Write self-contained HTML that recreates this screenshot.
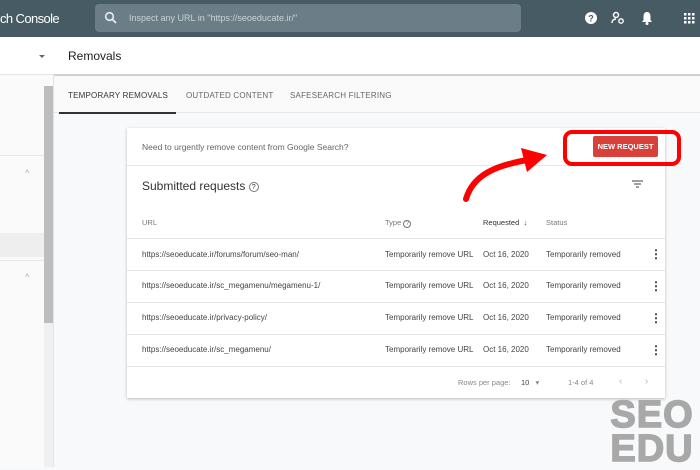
<!DOCTYPE html><html><head><style>
*{margin:0;padding:0;box-sizing:border-box}
body{width:700px;height:467px;overflow:hidden;background:#f8f9fa;font-family:"Liberation Sans",sans-serif;position:relative;color:#3c4043}
.a{position:absolute}
.t{font-size:8px;color:#444;white-space:nowrap}
</style></head><body>
<div class="a" style="left:0;top:0;width:700px;height:37px;background:#475b65"></div>
<div class="a" style="left:0;top:11px;font-size:13px;color:#fff;letter-spacing:-0.6px">ch Console</div>
<div class="a" style="left:95px;top:4px;width:426px;height:28px;background:#6b7e87;border-radius:4px"></div>
<svg class="a" style="left:104px;top:11px" width="14" height="14" viewBox="0 0 14 14"><circle cx="5.5" cy="5.5" r="3.8" fill="none" stroke="#e8eaed" stroke-width="1.6"/><path d="M8.3 8.3L12 12" stroke="#e8eaed" stroke-width="1.8"/></svg>
<div class="a" style="left:129px;top:13px;font-size:9px;color:#c9d1d5">Inspect any URL in "https://seoeducate.ir/"</div>
<svg class="a" style="left:584px;top:11px" width="14" height="14"><circle cx="7" cy="7" r="6" fill="#fff"/><text x="7" y="10.5" font-size="9" font-weight="bold" fill="#475b65" text-anchor="middle" font-family="Liberation Sans">?</text></svg>
<svg class="a" style="left:611px;top:11px" width="14" height="14"><circle cx="5" cy="4" r="2.5" fill="none" stroke="#fff" stroke-width="1.4"/><path d="M1 12c0-3 2-4 4-4" fill="none" stroke="#fff" stroke-width="1.4"/><circle cx="10" cy="10" r="2.2" fill="none" stroke="#fff" stroke-width="1.4"/></svg>
<svg class="a" style="left:641px;top:11px" width="12" height="14"><path d="M6 1C3 1 2.5 4 2.5 6v3L1 11h10L9.5 9V6C9.5 4 9 1 6 1z" fill="#fff"/><circle cx="6" cy="12.5" r="1.5" fill="#fff"/></svg>
<svg class="a" style="left:684px;top:13px" width="11" height="11" fill="#fff"><rect x="0" y="0" width="2.5" height="2.5"/><rect x="4" y="0" width="2.5" height="2.5"/><rect x="8" y="0" width="2.5" height="2.5"/><rect x="0" y="4" width="2.5" height="2.5"/><rect x="4" y="4" width="2.5" height="2.5"/><rect x="8" y="4" width="2.5" height="2.5"/><rect x="0" y="8" width="2.5" height="2.5"/><rect x="4" y="8" width="2.5" height="2.5"/><rect x="8" y="8" width="2.5" height="2.5"/></svg>
<!-- sidebar -->
<div class="a" style="left:0;top:37px;width:54px;height:430px;background:#fafafa;border-right:1px solid #e4e4e4"></div>
<div class="a" style="left:0;top:37px;width:54px;height:38px;background:#fff;border-bottom:1px solid #e4e4e4"></div>
<div class="a" style="left:39px;top:55px;border:3px solid transparent;border-top:3px solid #666"></div>
<div class="a" style="left:0;top:155px;width:44px;height:1px;background:#e8e8e8"></div>
<div class="a" style="left:0;top:233px;width:44px;height:24px;background:#eeeeee"></div>
<div class="a" style="left:0;top:260px;width:44px;height:1px;background:#e8e8e8"></div>
<div class="a" style="left:25px;top:168px;font-size:9px;color:#aaa">^</div>
<div class="a" style="left:25px;top:272px;font-size:9px;color:#aaa">^</div>
<div class="a" style="left:44px;top:86px;width:9px;height:237px;background:#bdbdbd"></div>
<div class="a" style="left:44px;top:323px;width:9px;height:144px;background:#f0f0f0"></div>
<!-- header -->
<div class="a" style="left:54px;top:37px;width:646px;height:39px;background:#fff;border-bottom:2px solid #d0d0d0"></div>
<div class="a" style="left:68px;top:49px;font-size:12px;color:#202124">Removals</div>
<div class="a" style="left:54px;top:77px;width:646px;height:36px;background:#fafafa;border-bottom:1px solid #e6e6e6"></div>
<div class="a" style="left:68px;top:91px;font-size:8px;color:#333;letter-spacing:0.2px">TEMPORARY REMOVALS</div>
<div class="a" style="left:186px;top:91px;font-size:8px;color:#666;letter-spacing:0.2px">OUTDATED CONTENT</div>
<div class="a" style="left:290px;top:91px;font-size:8px;color:#666;letter-spacing:0.2px">SAFESEARCH FILTERING</div>
<div class="a" style="left:59px;top:112px;width:117px;height:2px;background:#333"></div>
<!-- card -->
<div class="a" style="left:127px;top:128px;width:538px;height:270px;background:#fff;box-shadow:0 1px 3px rgba(0,0,0,.25)"></div>
<div class="a" style="left:142px;top:142px;font-size:8.5px;color:#666">Need to urgently remove content from Google Search?</div>
<div class="a" style="left:593px;top:136px;width:65px;height:21px;background:#d9403a;border-radius:2px;color:#fff;font-size:7.5px;font-weight:bold;text-align:center;line-height:21px">NEW REQUEST</div>
<div class="a" style="left:127px;top:165px;width:538px;height:1px;background:#e8e8e8"></div>
<div class="a" style="left:142px;top:179px;font-size:12px;color:#333">Submitted requests <span style="display:inline-block;width:10px;height:10px;border:1px solid #777;border-radius:50%;font-size:7px;text-align:center;line-height:9px;vertical-align:1px">?</span></div>
<svg class="a" style="left:632px;top:180px" width="11" height="9"><path d="M0 1h11M2 4h7M4 7h3" stroke="#666" stroke-width="1.3"/></svg>
<div class="a t" style="left:142px;top:218px;color:#777;font-size:7.5px">URL</div>
<div class="a t" style="left:385px;top:218px;color:#777;font-size:7.5px">Type <span style="display:inline-block;width:8px;height:8px;border:1px solid #777;border-radius:50%;font-size:6px;text-align:center;line-height:7px">?</span></div>
<div class="a t" style="left:483px;top:218px;color:#333;font-size:7.5px">Requested &nbsp;<b>↓</b></div>
<div class="a t" style="left:546px;top:218px;color:#777;font-size:7.5px">Status</div>
<div class="a" style="left:127px;top:238px;width:538px;height:1px;background:#e8e8e8"></div>
<div class="a" style="left:127px;top:270px;width:538px;height:1px;background:#e8e8e8"></div>
<div class="a" style="left:127px;top:302px;width:538px;height:1px;background:#e8e8e8"></div>
<div class="a" style="left:127px;top:334px;width:538px;height:1px;background:#e8e8e8"></div>
<div class="a" style="left:127px;top:366px;width:538px;height:1px;background:#e8e8e8"></div>
<div class="a t" style="left:142px;top:250px">https://seoeducate.ir/forums/forum/seo-man/</div>
<div class="a t" style="left:142px;top:281px">https://seoeducate.ir/sc_megamenu/megamenu-1/</div>
<div class="a t" style="left:142px;top:313px">https://seoeducate.ir/privacy-policy/</div>
<div class="a t" style="left:142px;top:345px">https://seoeducate.ir/sc_megamenu/</div>

<div class="a t" style="left:385px;top:250px">Temporarily remove URL</div>
<div class="a t" style="left:385px;top:281px">Temporarily remove URL</div>
<div class="a t" style="left:385px;top:313px">Temporarily remove URL</div>
<div class="a t" style="left:385px;top:345px">Temporarily remove URL</div>
<div class="a t" style="left:483px;top:250px">Oct 16, 2020</div>
<div class="a t" style="left:483px;top:281px">Oct 16, 2020</div>
<div class="a t" style="left:483px;top:313px">Oct 16, 2020</div>
<div class="a t" style="left:483px;top:345px">Oct 16, 2020</div>
<div class="a t" style="left:546px;top:250px">Temporarily removed</div>
<div class="a t" style="left:546px;top:281px">Temporarily removed</div>
<div class="a t" style="left:546px;top:313px">Temporarily removed</div>
<div class="a t" style="left:546px;top:345px">Temporarily removed</div>
<div class="a" style="left:650px;top:247px;font-size:12px;font-weight:bold;color:#333">⋮</div>
<div class="a" style="left:650px;top:279px;font-size:12px;font-weight:bold;color:#333">⋮</div>
<div class="a" style="left:650px;top:311px;font-size:12px;font-weight:bold;color:#333">⋮</div>
<div class="a" style="left:650px;top:343px;font-size:12px;font-weight:bold;color:#333">⋮</div>
<div class="a t" style="left:458px;top:378px;color:#888;font-size:7.5px">Rows per page: &nbsp;&nbsp;&nbsp;&nbsp;<span style="color:#444">10</span> &nbsp;&nbsp;▾</div>
<div class="a t" style="left:568px;top:378px;color:#888;font-size:7.5px">1-4 of 4</div>
<div class="a t" style="left:619px;top:376px;color:#bbb;font-size:10px">‹</div>
<div class="a t" style="left:645px;top:376px;color:#bbb;font-size:10px">›</div>
<!-- annotations -->
<div class="a" style="left:563px;top:130px;width:118px;height:36px;border:4px solid #f00;border-radius:9px"></div>
<svg class="a" style="left:455px;top:140px" width="100" height="70"><path d="M11 59C18 35 40 25 78 19" fill="none" stroke="#f00" stroke-width="6" stroke-linecap="round"/><path d="M66 8L92 15L72 32Z" fill="#f00"/></svg>
<div class="a" style="left:606px;top:398px;font-size:38px;font-weight:900;color:#a8a8a8;line-height:34px;letter-spacing:1px;text-align:center;width:92px;-webkit-text-stroke:1.5px #a8a8a8">SEO<br>EDU</div>
</body></html>
